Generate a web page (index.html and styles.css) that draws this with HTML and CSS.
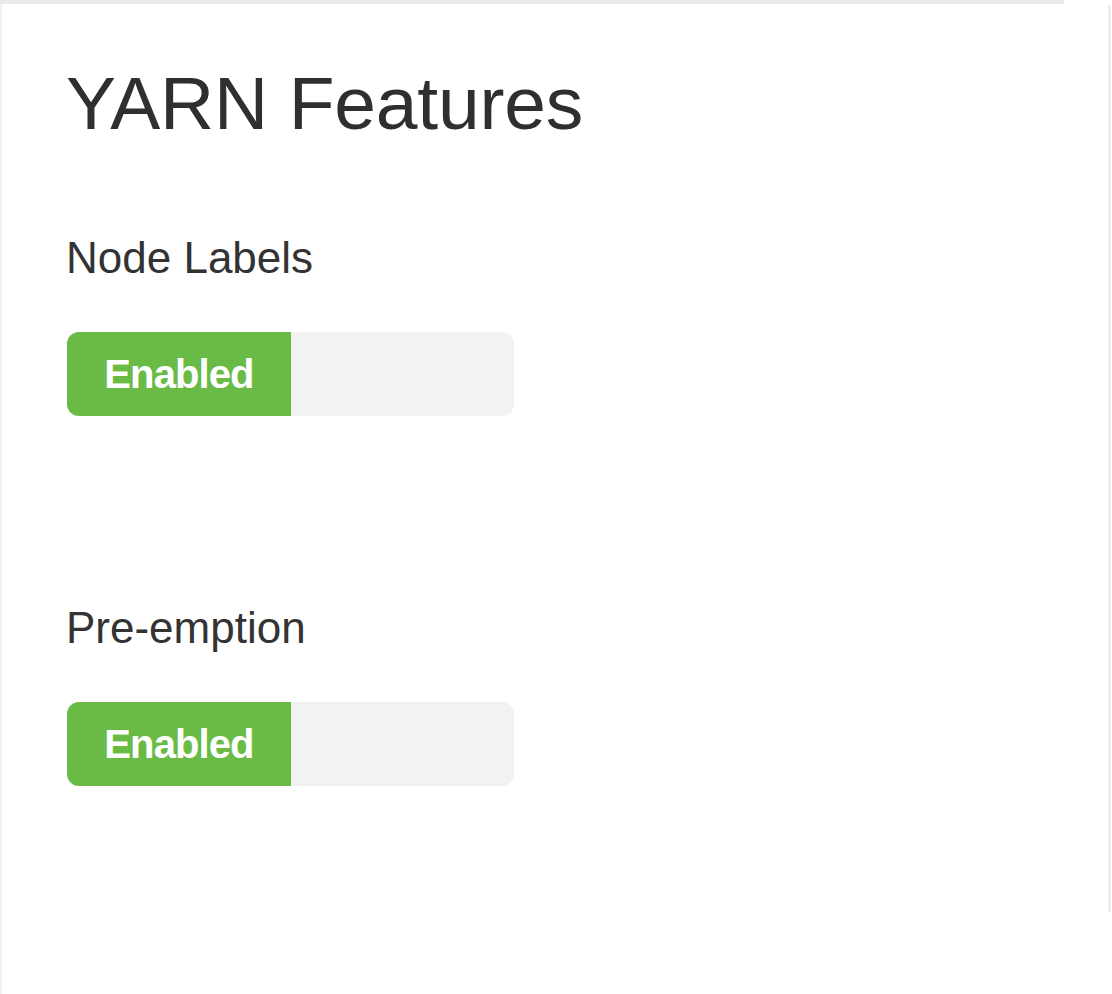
FILE: index.html
```html
<!DOCTYPE html>
<html lang="en">
<head>
<meta charset="utf-8">
<title>YARN Features</title>
<link rel="stylesheet" href="styles.css">
</head>
<body>
<div class="page">
  <div class="topbar"></div>
  <div class="row">
    <section class="panel">
      <h1 class="title">YARN Features</h1>
      <div class="feature">
        <div class="label">Node Labels</div>
        <div class="switch">
          <span class="switch-on">Enabled</span>
          <span class="switch-off"></span>
        </div>
      </div>
      <div class="feature">
        <div class="label">Pre-emption</div>
        <div class="switch">
          <span class="switch-on">Enabled</span>
          <span class="switch-off"></span>
        </div>
      </div>
    </section>
    <div class="divider"></div>
  </div>
</div>
</body>
</html>
```

FILE: styles.css
```css
html, body {
  margin: 0;
  padding: 0;
  background: #ffffff;
}

body {
  font-family: "Liberation Sans", Arial, Helvetica, sans-serif;
  color: #333333;
}

.page {
  width: 1112px;
  height: 994px;
  display: flex;
  flex-direction: column;
  overflow: hidden;
}

.topbar {
  width: 1064px;
  height: 4px;
  background: #ebebeb;
  flex: none;
}

.row {
  flex: 1;
  display: flex;
}

.panel {
  flex: 1;
  border-left: 2px solid #f1f1f1;
  padding: 58px 0 0 64px;
}

.divider {
  width: 3px;
  height: 907px;
  margin-top: 1px;
  margin-right: 1px;
  background: #ededed;
}

.title {
  margin: 0;
  font-size: 75px;
  line-height: 82px;
  font-weight: 400;
  color: #2f2f2f;
  letter-spacing: -0.2px;
}

.feature {
  margin-top: 87px;
}

.feature + .feature {
  margin-top: 185px;
}

.label {
  font-size: 44px;
  line-height: 53px;
  color: #333333;
}

.switch {
  margin-top: 48px;
  margin-left: 1px;
  width: 447px;
  height: 84px;
  border-radius: 12px;
  background: #f2f2f2;
  display: flex;
  overflow: hidden;
}

.switch-on {
  width: 224px;
  background: #69bb46;
  color: #ffffff;
  font-weight: 700;
  font-size: 40px;
  display: flex;
  align-items: center;
  justify-content: center;
  letter-spacing: -0.9px;
}

.switch-off {
  flex: 1;
}
```
